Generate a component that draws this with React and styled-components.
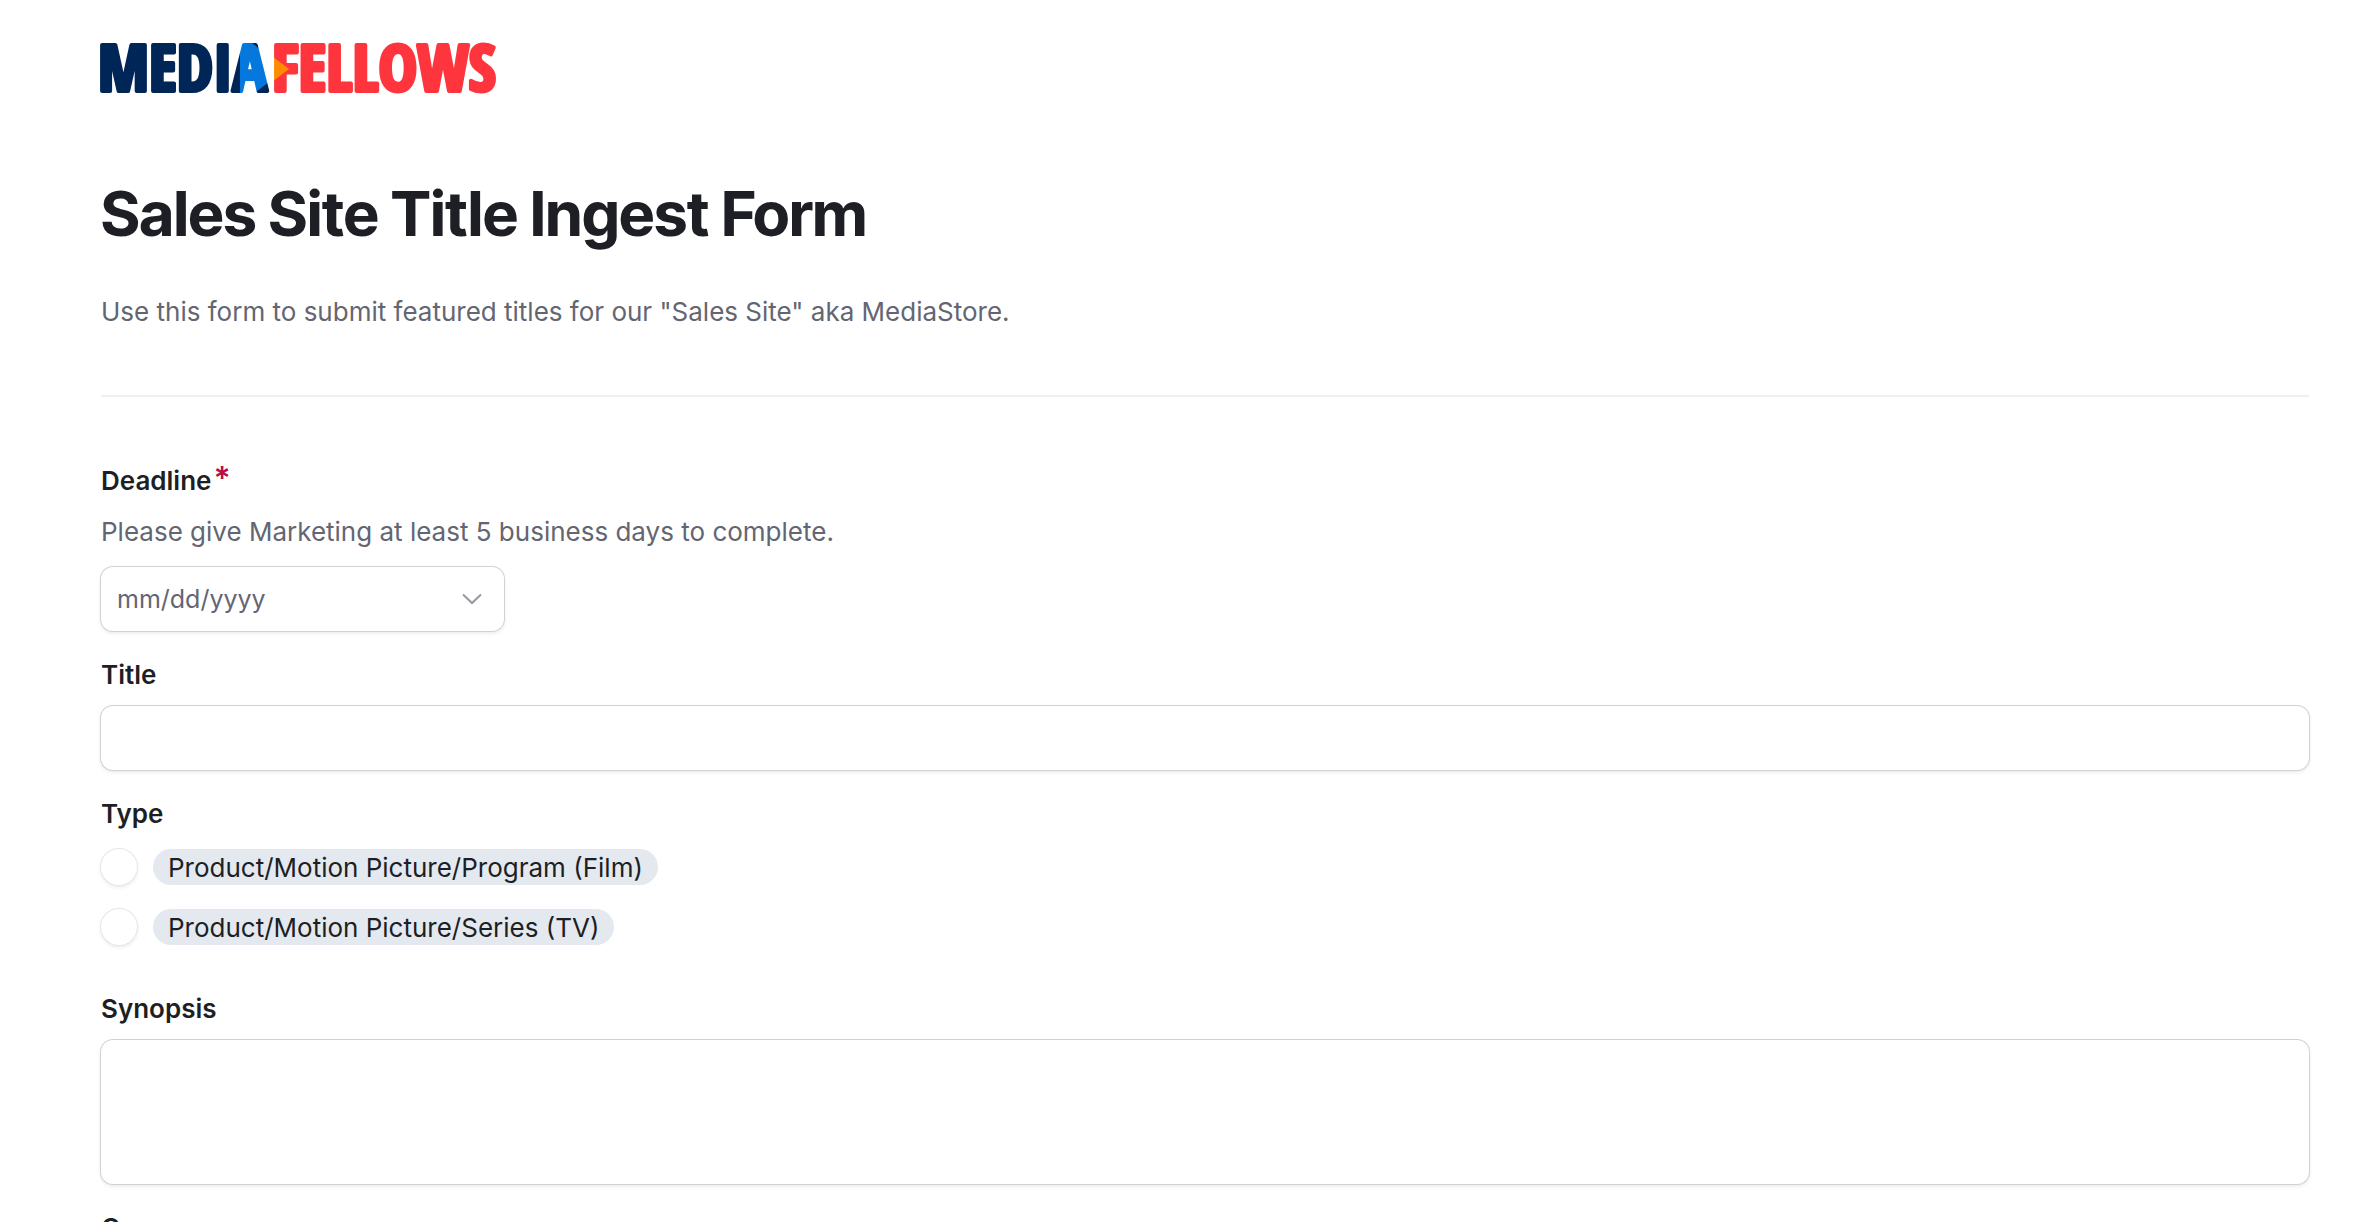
import React from "react";
import styled, { createGlobalStyle } from "styled-components";

const GlobalStyle = createGlobalStyle`
  * {
    box-sizing: border-box;
  }

  body {
    margin: 0;
    background: #ffffff;
    color: #1d1f25;
    font-family: Inter, "Liberation Sans", sans-serif;
    font-size: 26px;
    line-height: 32px;
  }
`;

const Page = styled.main`
  height: 100vh;
  padding: 42px 47px 0 101px;
  overflow-y: auto;
  scrollbar-width: none;
`;

const Logo = styled.svg`
  display: block;
  width: 402px;
  height: 52px;
  overflow: visible;
  font-family: "Open Sans Condensed", "Roboto Condensed", sans-serif;
  font-size: 65px;
  font-weight: 700;
  stroke-width: 4px;
  stroke-linejoin: round;
`;

const Header = styled.header`
  padding-bottom: 67px;
  border-bottom: 2px solid #f0f0f0;
`;

const Heading = styled.h1`
  margin: 80px 0 42px;
  font-family: "Inter Tight", Inter, sans-serif;
  font-size: 62px;
  font-weight: 700;
  line-height: 80px;
`;

const Intro = styled.p`
  margin: 0;
  color: #636672;
`;

const Hint = styled(Intro)`
  margin: 4px 0;
`;

const Form = styled.form`
  display: flex;
  flex-direction: column;
  gap: 28px;
  padding: 68px 0 28px;
`;

const Field = styled.div`
  display: flex;
  flex-direction: column;
  gap: 15px;
`;

const FieldGroup = styled.fieldset`
  margin: 0;
  padding: 0 0 20px;
  border: 0;
`;

const Label = styled.label`
  font-weight: 600;
`;

const Legend = styled.legend`
  padding: 0;
  margin-bottom: 19px;
  font-weight: 600;
`;

const Required = styled.span`
  margin-left: 2px;
  color: #b80f46;
  font-size: 32px;
  line-height: 0;
`;

const control = `
  width: 100%;
  border: 0;
  border-radius: 12px;
  background: #ffffff;
  box-shadow: 0 0 0 1px #d2d2d4, 0 2px 4px rgba(0, 0, 0, 0.1);
  color: inherit;
  font: inherit;
  font-size: 25px;
  outline: none;
`;

const TextInput = styled.input`
  ${control}
  height: 64px;
  padding: 0 16px;

  &::placeholder {
    color: #636672;
    opacity: 1;
  }
`;

const TextArea = styled.textarea`
  ${control}
  display: block;
  height: 144px;
  padding: 16px;
  resize: none;
`;

const DateBox = styled.div`
  position: relative;
  width: 403px;
`;

const DateToggle = styled.button`
  position: absolute;
  top: 0;
  right: 0;
  display: flex;
  align-items: center;
  height: 100%;
  padding: 0 22px;
  border: 0;
  background: none;
`;

const Options = styled.div`
  display: flex;
  flex-direction: column;
  gap: 24px;
`;

const Option = styled.label`
  display: flex;
  align-items: center;
  gap: 16px;
`;

const Radio = styled.input`
  appearance: none;
  width: 36px;
  height: 36px;
  margin: 0;
  border-radius: 50%;
  background: #ffffff;
  box-shadow: 0 0 0 1px #e6e6e8, 0 2px 4px rgba(0, 0, 0, 0.1);

  &:checked {
    border: 12px solid #1d1f25;
  }
`;

const Pill = styled.span`
  padding: 3px 15px 1px;
  border-radius: 18px;
  background: #e4e9f0;
`;

const types = [
  { value: "film", label: "Product/Motion Picture/Program (Film)" },
  { value: "tv", label: "Product/Motion Picture/Series (TV)" }
];

const MediaFellowsLogo = () => (
  <Logo viewBox="0 0 402 52" role="img" aria-label="MediaFellows">
    <defs>
      <pattern
        id="media"
        x="-10"
        y="-10"
        width="430"
        height="80"
        patternUnits="userSpaceOnUse"
      >
        <rect width="430" height="80" fill="#002657" />
        <path d="M149 2L195 37L149 72Z" fill="#0478dd" />
      </pattern>
      <pattern
        id="fellows"
        x="-10"
        y="-10"
        width="430"
        height="80"
        patternUnits="userSpaceOnUse"
      >
        <rect width="430" height="80" fill="#ff353e" />
        <path d="M152 2L198 37L152 72Z" fill="#ff8c00" />
      </pattern>
    </defs>
    <text x="-3" y="49" fill="url(#media)" stroke="url(#media)">
      MEDIA
    </text>
    <text x="171" y="49" fill="url(#fellows)" stroke="url(#fellows)">
      FELLOWS
    </text>
  </Logo>
);

const DateField = () => (
  <Field>
    <Label htmlFor="deadline">
      Deadline
      <Required>*</Required>
    </Label>
    <Hint id="deadline-hint">
      Please give Marketing at least 5 business days to complete.
    </Hint>
    <DateBox>
      <TextInput
        id="deadline"
        type="text"
        placeholder="mm/dd/yyyy"
        aria-describedby="deadline-hint"
        required
      />
      <DateToggle type="button" aria-label="Open calendar">
        <svg width="20" height="12" viewBox="0 0 20 12" fill="none">
          <path d="M1 1.5L10 10L19 1.5" stroke="#96989f" strokeWidth="2" />
        </svg>
      </DateToggle>
    </DateBox>
  </Field>
);

const App = () => (
  <>
    <GlobalStyle />
    <Page>
      <Header>
        <MediaFellowsLogo />
        <Heading>Sales Site Title Ingest Form</Heading>
        <Intro>
          Use this form to submit featured titles for our "Sales Site" aka
          MediaStore.
        </Intro>
      </Header>
      <Form>
        <DateField />
        <Field>
          <Label htmlFor="title">Title</Label>
          <TextInput id="title" type="text" />
        </Field>
        <FieldGroup>
          <Legend>Type</Legend>
          <Options>
            {types.map(type => (
              <Option key={type.value}>
                <Radio type="radio" name="type" value={type.value} />
                <Pill>{type.label}</Pill>
              </Option>
            ))}
          </Options>
        </FieldGroup>
        <Field>
          <Label htmlFor="synopsis">Synopsis</Label>
          <TextArea id="synopsis" />
        </Field>
        <Field>
          <Label htmlFor="genre">Genre</Label>
          <TextInput id="genre" type="text" />
        </Field>
      </Form>
    </Page>
  </>
);

export default App;
